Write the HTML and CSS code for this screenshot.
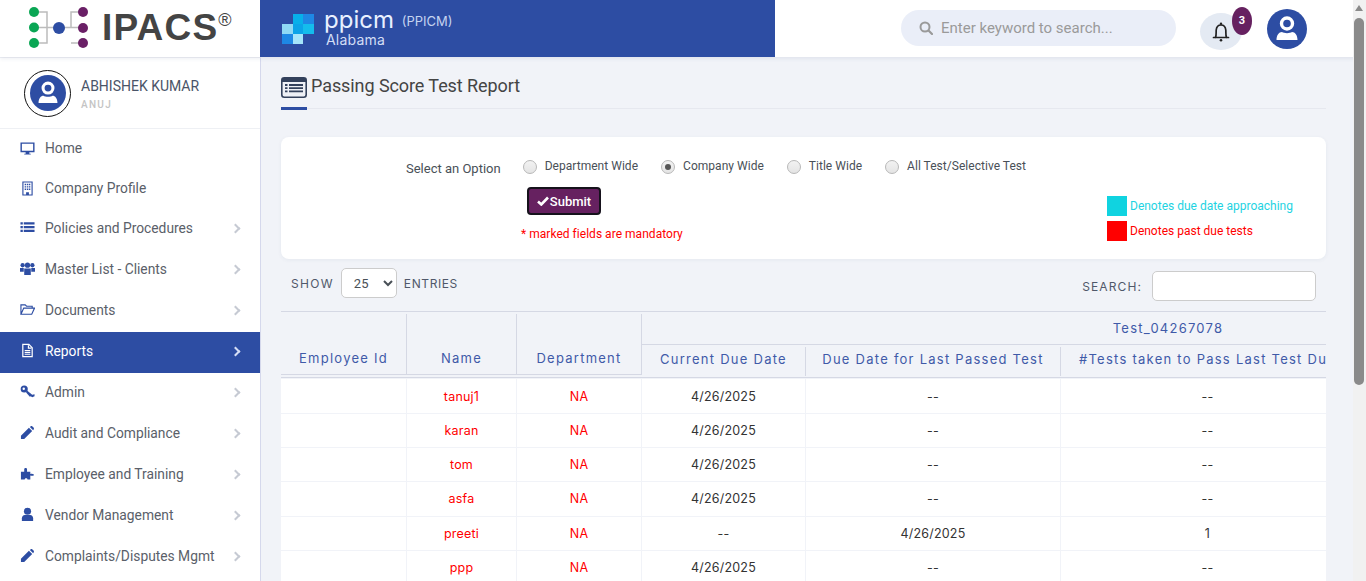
FILE: index.html
```html
<!DOCTYPE html>
<html lang="en">

<head>
    <meta charset="UTF-8">
    <meta name="viewport" content="width=device-width, initial-scale=1.0">
    <title>Passing Score Test Report</title>
    <link rel="stylesheet" href="styles.css">
</head>

<body>
    <header class="topbar">
        <div class="brand">
            <svg class="brand-tree" width="64" height="57" viewBox="0 0 64 57">
                <path d="M6 12H19V43H6M6 27.500H43V12H55M43 43H55M43 27.500H55" fill="none" stroke="#bcbcbc" stroke-width="1.500"/>
                <circle cx="6" cy="12" r="5" fill="#0aa654"/>
                <circle cx="6" cy="27.500" r="5" fill="#0aa654"/>
                <circle cx="6" cy="43" r="5" fill="#0aa654"/>
                <circle cx="31" cy="28" r="6" fill="#2d4da3"/>
                <circle cx="55" cy="12" r="5" fill="#6a1f66"/>
                <circle cx="55" cy="28" r="5" fill="#6a1f66"/>
                <circle cx="55" cy="43" r="5" fill="#6a1f66"/>
            </svg>
            <span class="brand-name">IPACS<sup>®</sup></span>
        </div>
        <div class="org">
            <svg width="32" height="30" viewBox="0 0 32 30">
                <rect x="11" y="0" width="10" height="10" fill="#07b0ea"/>
                <rect x="21" y="0" width="11" height="10" fill="#1e88e5"/>
                <rect x="0" y="10" width="11" height="10" fill="#8fd9f5"/>
                <rect x="11" y="10" width="10" height="10" fill="#0ba4e8"/>
                <rect x="21" y="10" width="11" height="10" fill="#14bdec"/>
                <rect x="0" y="20" width="11" height="10" fill="#1e88e5"/>
                <rect x="11" y="20" width="10" height="10" fill="#a5e5fa"/>
            </svg>
            <div class="org-text">
                <div class="org-name">ppicm <small>(PPICM)</small></div>
                <div class="org-state">Alabama</div>
            </div>
        </div>
        <div class="topbar-right">
            <div class="search-box">
                <svg width="14" height="14" viewBox="0 0 14 14"><circle cx="6" cy="6" r="4.500" fill="none" stroke="#9a9a9a" stroke-width="2"/><path d="M9.500 9.500L13 13" stroke="#9a9a9a" stroke-width="2.200" stroke-linecap="round"/></svg>
                <span>Enter keyword to search...</span>
            </div>
            <div class="bell">
                <svg width="18" height="20" viewBox="0 0 18 20"><path d="M1.500 15.500H16.500M3.500 15.500C4.500 13 4 10 4.200 8C4.500 5 6.500 3 9 3C11.500 3 13.500 5 13.800 8C14 10 13.500 13 14.500 15.500" fill="none" stroke="#222" stroke-width="1.700" stroke-linecap="round"/><circle cx="9" cy="1.800" r="1.200" fill="#222"/><circle cx="9" cy="18.200" r="1.300" fill="#222"/></svg>
                <span class="bell-count">3</span>
            </div>
            <svg class="avatar-top" width="40" height="40" viewBox="0 0 40 40"><use href="#user-disc"/></svg>
        </div>
    </header>

    <svg width="0" height="0" class="defs">
        <symbol id="user-disc" viewBox="0 0 40 40">
            <circle cx="20" cy="20" r="20" fill="#2d4da3"/>
            <circle cx="20" cy="14.500" r="5.500" fill="none" stroke="#fff" stroke-width="3.400"/>
            <path d="M9.500 31C9.500 26 12 23 15 23C17 24.500 23 24.500 25 23C28 23 30.500 26 30.500 31Z" fill="#fff"/>
        </symbol>
    </svg>

    <div class="layout">
        <aside class="sidebar">
            <div class="profile">
                <div class="profile-ring"><svg width="36" height="36" viewBox="0 0 40 40"><use href="#user-disc"/></svg></div>
                <div class="profile-text">
                    <div class="profile-name">ABHISHEK KUMAR</div>
                    <div class="profile-role">ANUJ</div>
                </div>
            </div>
            <nav class="menu">
                <a class="menu-item short"><svg viewBox="0 0 16 16"><path d="M0.500 1.500H15.500V12H10V13.500H11.500V14.500H4.500V13.500H6V12H0.500ZM2 3V10.300H14V3Z" fill-rule="evenodd"/></svg>Home</a>
                <a class="menu-item short"><svg viewBox="0 0 16 16"><path d="M2.500 0.500H13.500V15.500H2.500ZM3.700 1.700V14.300H6.500V12H9.500V14.300H12.300V1.700ZM5 3H6.500V4.500H5ZM7.300 3H8.800V4.500H7.300ZM9.500 3H11V4.500H9.500ZM5 5.500H6.500V7H5ZM7.300 5.500H8.800V7H7.300ZM9.500 5.500H11V7H9.500ZM5 8H6.500V9.500H5ZM7.300 8H8.800V9.500H7.300ZM9.500 8H11V9.500H9.500Z" fill-rule="evenodd"/></svg>Company Profile</a>
                <a class="menu-item has-sub"><svg viewBox="0 0 16 16"><path d="M0.500 2.500H3V4.800H0.500ZM4 2.500H15.500V4.800H4ZM0.500 6.500H3V8.800H0.500ZM4 6.500H15.500V8.800H4ZM0.500 10.500H3V12.800H0.500ZM4 10.500H15.500V12.800H4Z"/></svg>Policies and Procedures</a>
                <a class="menu-item has-sub"><svg viewBox="0 0 16 16"><circle cx="2.800" cy="4.500" r="2.300"/><circle cx="13.200" cy="4.500" r="2.300"/><circle cx="8" cy="4.500" r="2.800"/><path d="M0 7.500H4V11.500H0ZM12 7.500H16V11.500H12ZM4.500 8H11.500V15H4.500Z"/></svg>Master List - Clients</a>
                <a class="menu-item has-sub"><svg viewBox="0 0 16 16"><path d="M1 13V3H5.500L7 4.500H13V6.500M1 13L4 6.500H15.500L12.500 13Z" fill="none" stroke="#2d4da3" stroke-width="1.200"/></svg>Documents</a>
                <a class="menu-item has-sub active"><svg viewBox="0 0 16 16"><path d="M3 1.500H9.500L13 5V14.500H3ZM9 2.500V5.500H12M5 8H11M5 10H11M5 12H11" fill="none" stroke="#fff" stroke-width="1.300"/></svg>Reports</a>
                <a class="menu-item has-sub"><svg viewBox="0 0 16 16"><path d="M4.500 1.500A3.800 3.800 0 1 1 4.500 9.100A3.800 3.800 0 1 1 4.500 1.500ZM4 3.800A1.300 1.300 0 1 0 4 6.400A1.300 1.300 0 1 0 4 3.800Z" fill-rule="evenodd"/><path d="M7.500 7L13 11.500L15.500 11V13L13 14L11.500 13L10.500 13.500L6.500 9Z"/></svg>Admin</a>
                <a class="menu-item has-sub"><svg viewBox="0 0 16 16"><path d="M1 11.500L9.500 3L13 6.500L4.500 15H1ZM10.500 2L11.500 1.300C12 1 12.500 1 13 1.300L14.700 3C15 3.500 15 4 14.700 4.500L14 5.500Z"/></svg>Audit and Compliance</a>
                <a class="menu-item has-sub"><svg viewBox="0 0 16 16"><path d="M1 6H4.500V3.500C4.500 1.500 7.500 1.500 7.500 3.500V6H11V8.500C13.500 7.500 15 9.200 15 9.500C15 10 13 11 11 10V14.500H8C8 12.500 5 12.500 5 14.500H1Z"/></svg>Employee and Training</a>
                <a class="menu-item has-sub"><svg viewBox="0 0 16 16"><circle cx="8" cy="4.500" r="3.800"/><path d="M2 15V12C2 10 3.500 8.500 5 8.500H11C12.500 8.500 14 10 14 12V15Z"/></svg>Vendor Management</a>
                <a class="menu-item has-sub"><svg viewBox="0 0 16 16"><path d="M1 11.500L9.500 3L13 6.500L4.500 15H1ZM10.500 2L11.500 1.300C12 1 12.500 1 13 1.300L14.700 3C15 3.500 15 4 14.700 4.500L14 5.500Z"/></svg>Complaints/Disputes Mgmt</a>
            </nav>
        </aside>

        <main class="content">
            <div class="page-title">
                <svg width="26" height="21" viewBox="0 0 26 21"><rect x="0.800" y="0.800" width="24.400" height="19.400" rx="2.500" fill="#eef0f6" stroke="#33415c" stroke-width="1.600"/><path d="M1 1H25V5H1Z" fill="#33415c"/><path d="M4 8H6.500M8 8H22M4 11.200H6.500M8 11.200H22M4 14.400H6.500M8 14.400H22" stroke="#33415c" stroke-width="1.800"/></svg>
                <h1>Passing Score Test Report</h1>
            </div>

            <section class="card">
                <div class="option-form">
                    <div class="option-row">
                        <label class="option-label">Select an Option</label>
                        <div class="radios">
                            <label class="radio"><input type="radio" name="opt">Department Wide</label>
                            <label class="radio"><input type="radio" name="opt" checked>Company Wide</label>
                            <label class="radio"><input type="radio" name="opt">Title Wide</label>
                            <label class="radio"><input type="radio" name="opt">All Test/Selective Test</label>
                        </div>
                    </div>
                    <button class="submit-btn"><svg width="12" height="10" viewBox="0 0 12 10"><path d="M1 5.500L4.300 8.500L11 1.500" fill="none" stroke="#fff" stroke-width="2.600"/></svg>Submit</button>
                    <p class="mandatory">* marked fields are mandatory</p>
                </div>
                <div class="legend">
                    <div class="legend-row due"><span class="swatch"></span>Denotes due date approaching</div>
                    <div class="legend-row past"><span class="swatch"></span>Denotes past due tests</div>
                </div>
            </section>

            <div class="table-tools">
                <div class="tool show-tool">SHOW
                    <select class="entries"><option>25</option></select>
                    <span class="entries-label">ENTRIES</span></div>
                <div class="tool search-tool">SEARCH: <input class="table-search" type="text"></div>
            </div>

            <div class="table-wrap">
                <table class="report">
                    <colgroup>
                        <col class="c-emp"><col class="c-name"><col class="c-dept"><col class="c-due"><col class="c-last"><col class="c-tests"><col class="c-more">
                    </colgroup>
                    <thead>
                        <tr>
                            <th rowspan="2" class="frozen"><div>Employee Id</div></th>
                            <th rowspan="2" class="frozen"><div>Name</div></th>
                            <th rowspan="2" class="frozen"><div>Department</div></th>
                            <th colspan="4" class="group">Test_04267078</th>
                        </tr>
                        <tr class="sub-head">
                            <th><div>Current Due Date</div></th>
                            <th><div>Due Date for Last Passed Test</div></th>
                            <th><div class="long-head">#Tests taken to Pass Last Test Due Date</div></th>
                            <th></th>
                        </tr>
                    </thead>
                    <tbody>
                        <tr><td></td><td class="red">tanuj1</td><td class="red">NA</td><td>4/26/2025</td><td>--</td><td>--</td><td></td></tr>
                        <tr><td></td><td class="red">karan</td><td class="red">NA</td><td>4/26/2025</td><td>--</td><td>--</td><td></td></tr>
                        <tr><td></td><td class="red">tom</td><td class="red">NA</td><td>4/26/2025</td><td>--</td><td>--</td><td></td></tr>
                        <tr><td></td><td class="red">asfa</td><td class="red">NA</td><td>4/26/2025</td><td>--</td><td>--</td><td></td></tr>
                        <tr><td></td><td class="red">preeti</td><td class="red">NA</td><td>--</td><td>4/26/2025</td><td>1</td><td></td></tr>
                        <tr><td></td><td class="red">ppp</td><td class="red">NA</td><td>4/26/2025</td><td>--</td><td>--</td><td></td></tr>
                    </tbody>
                </table>
            </div>
        </main>
    </div>

    <div class="scroll-track">
        <span class="scroll-arrow"></span>
        <span class="scroll-thumb"></span>
    </div>
</body>

</html>
```
FILE: styles.css
```css
* {
    box-sizing: border-box;
}

html, body {
    height: 100%;
}

body {
    margin: 0;
    overflow: hidden;
    background: #f1f3f8;
    font-family: Roboto, "Liberation Sans", sans-serif;
    color: #495057;
}

.defs {
    position: absolute;
}

/* top bar */
.topbar {
    display: flex;
    height: 57px;
    background: #fff;
    box-shadow: 0 2px 4px rgba(40, 60, 110, .08);
    position: relative;
}

.brand {
    width: 260px;
    display: flex;
    align-items: center;
    padding-left: 28px;
    gap: 10px;
}

.brand-tree {
    flex: none;
}

.brand-name {
    font-family: "Liberation Sans", Arial, sans-serif;
    font-weight: 700;
    font-size: 37px;
    color: #444;
    letter-spacing: 1.200px;
    line-height: 1;
    margin-top: -2px;
}

.brand-name sup {
    font-size: 18px;
    font-weight: 400;
    vertical-align: 14px;
    line-height: 0;
    letter-spacing: 0;
}

.org {
    width: 515px;
    background: #2d4da3;
    display: flex;
    align-items: center;
    padding-left: 22px;
    gap: 10px;
    color: #e8f0ff;
}

.org-text {
    padding-bottom: 3px;
}

.org-name {
    font-family: Inter, sans-serif;
    font-size: 24px;
    line-height: 24px;
}

.org-name small {
    font-size: 13px;
    margin-left: 1px;
    vertical-align: 2px;
    color: #c5d3f0;
}

.org-state {
    font-family: Inter, sans-serif;
    font-size: 14px;
    line-height: 13px;
    margin-left: 2px;
    letter-spacing: .2px;
    color: #d3def5;
}

.topbar-right {
    flex: 1;
    display: flex;
    align-items: center;
    padding-left: 126px;
}

.search-box {
    width: 275px;
    height: 36px;
    border-radius: 18px;
    background: #eaeef8;
    display: flex;
    align-items: center;
    gap: 8px;
    padding-left: 18px;
    color: #9a9a9a;
    font-size: 15px;
    margin-top: -1px;
}

.bell {
    width: 42px;
    height: 37px;
    border-radius: 50%;
    background: #e4eaf3;
    margin-left: 24px;
    margin-top: 6px;
    display: flex;
    align-items: center;
    justify-content: center;
    position: relative;
}

.bell-count {
    position: absolute;
    top: -6px;
    right: -10px;
    width: 20px;
    height: 28px;
    border-radius: 10px / 14px;
    background: #662160;
    color: #fff;
    font-size: 11px;
    font-weight: 700;
    text-align: center;
    line-height: 27px;
}

.avatar-top {
    margin-left: 25px;
}

/* sidebar */
.layout {
    display: flex;
    height: 524px;
}

.sidebar {
    width: 261px;
    flex: none;
    background: #fff;
    border-right: 1px solid #d5d8ec;
    border-top: 1px solid #eef0f4;
}

.profile {
    height: 71px;
    display: flex;
    align-items: center;
    gap: 10px;
    padding-left: 24px;
    border-bottom: 1px solid #eef0f4;
}

.profile-ring {
    width: 47px;
    height: 47px;
    border: 1px solid #111;
    border-radius: 50%;
    display: flex;
    align-items: center;
    justify-content: center;
    background: #fff;
}

.profile-text {
    padding-top: 2px;
}

.profile-name {
    font-size: 14px;
    line-height: 17px;
    color: #4a5468;
}

.profile-role {
    font-size: 10px;
    font-weight: 500;
    letter-spacing: 1.300px;
    color: #c4c4c4;
    margin-top: 4px;
}

.menu-item {
    display: flex;
    align-items: center;
    height: 41px;
    padding: 0 0 4px 20px;
    font-size: 13.800px;
    color: #5a6069;
    position: relative;
}

.menu-item.short {
    height: 40px;
    padding-bottom: 2px;
}

.menu-item svg {
    width: 15px;
    height: 15px;
    margin-right: 10px;
    fill: #2d4da3;
    flex: none;
}

.menu-item.has-sub::after {
    content: "";
    position: absolute;
    right: 21px;
    top: calc(50% - 2px);
    width: 5px;
    height: 5px;
    margin-top: -3px;
    border-top: 2px solid #c6cad3;
    border-right: 2px solid #c6cad3;
    transform: rotate(45deg);
}

.menu-item.active {
    background: #2d4da3;
    color: #fff;
}

.menu-item.active svg {
    fill: #fff;
}

.menu-item.active::after {
    border-color: #d5def5;
}

/* main */
.content {
    flex: 1;
    min-width: 0;
    padding: 19px 40px 0 20px;
}

.page-title {
    display: flex;
    align-items: flex-start;
    gap: 4px;
    height: 33px;
    border-bottom: 1px solid #e6e8ef;
    position: relative;
}

.page-title svg {
    margin-top: 1px;
}

.page-title::after {
    content: "";
    position: absolute;
    left: 0;
    bottom: -2px;
    width: 26px;
    height: 3px;
    background: #2d4da3;
}

.page-title h1 {
    margin: 0;
    font-size: 18px;
    line-height: 20px;
    font-weight: 400;
    letter-spacing: -.08px;
    color: #444;
}

.card {
    margin-top: 28px;
    height: 122px;
    background: #fff;
    border-radius: 8px;
    box-shadow: 0 1px 4px rgba(40, 60, 110, .06);
    display: flex;
    justify-content: space-between;
    padding: 20px 32px 0 125px;
}

.option-row {
    display: flex;
    align-items: flex-start;
}

.option-label {
    font-size: 13px;
    line-height: 24px;
    color: #495057;
    margin-right: 22px;
}

.radios {
    display: flex;
    gap: 23px;
}

.radio {
    display: flex;
    align-items: center;
    font-size: 12px;
    letter-spacing: .03px;
    height: 18px;
    color: #495057;
}

.radio input {
    appearance: none;
    width: 14px;
    height: 14px;
    margin: 2px 8px 0 0;
    border: 1px solid #b8b8b8;
    border-radius: 50%;
    background: linear-gradient(#f2f2f2, #e4e4e4);
    position: relative;
}

.radio input:checked::before {
    content: "";
    position: absolute;
    left: 3px;
    top: 3px;
    width: 6px;
    height: 6px;
    border-radius: 50%;
    background: #555;
}

.submit-btn {
    display: flex;
    align-items: center;
    justify-content: center;
    gap: 1px;
    width: 74px;
    height: 28px;
    margin: 6px 0 0 121px;
    padding: 0;
    background: #662160;
    border: 2px solid #16121c;
    border-radius: 4px;
    color: #fff;
    font-family: Roboto, sans-serif;
    font-size: 13px;
    font-weight: 500;
}

.mandatory {
    margin: 12px 0 0 115px;
    font-size: 12px;
    letter-spacing: .03px;
    color: #ff0000;
}

.legend {
    padding-top: 39px;
    width: 187px;
}

.legend-row {
    display: flex;
    align-items: flex-start;
    height: 20px;
    line-height: 21px;
    gap: 3px;
    font-size: 12px;
    margin-bottom: 5px;
}

.swatch {
    width: 20px;
    height: 20px;
}

.due {
    color: #1ed3e2;
}

.due .swatch {
    background: #10d3e0;
}

.past {
    color: #ff0000;
}

.past .swatch {
    background: #ff0000;
}

/* table */
.table-tools {
    display: flex;
    justify-content: space-between;
    align-items: center;
    height: 30px;
    margin-top: 10px;
    padding: 0 10px;
}

.tool {
    display: flex;
    align-items: center;
    gap: 7px;
    font-family: Inter, sans-serif;
    font-size: 12px;
    letter-spacing: 1.300px;
    color: #50586a;
}

.show-tool {
    padding-bottom: 2px;
}

.entries-label {
    letter-spacing: .6px;
}

.search-tool {
    padding-top: 4px;
    letter-spacing: 1.100px;
}

.entries {
    width: 56px;
    height: 30px;
    border: 1px solid #ccc;
    border-radius: 5px;
    background: #fff;
    font-family: Roboto, sans-serif;
    font-size: 13px;
    color: #495057;
    padding-left: 8px;
}

.table-search {
    width: 164px;
    height: 30px;
    border: 1px solid #ccc;
    border-radius: 5px;
    background: #fff;
    margin-left: 3px;
}

.table-wrap {
    overflow: hidden;
    margin-top: 12px;
    border-top: 1px solid #d5d8e4;
}

.report {
    border-collapse: separate;
    border-spacing: 0;
    table-layout: fixed;
    width: 1413px;
    font-family: Inter, sans-serif;
    font-size: 12.500px;
    letter-spacing: .2px;
}

.c-emp { width: 126px; }
.c-name { width: 110px; }
.c-dept { width: 125px; }
.c-due { width: 164px; }
.c-last { width: 255px; }
.c-tests { width: 294px; }
.c-more { width: 339px; }

.report th {
    font-family: Inter, sans-serif;
    font-size: 13px;
    font-weight: 400;
    letter-spacing: 1.250px;
    color: #3f5aa8;
    padding: 0;
    white-space: nowrap;
}

.frozen {
    height: 66px;
    vertical-align: top;
    padding-top: 2px !important;
    border-bottom: 1px solid #d5d8e4;
}

.frozen div {
    height: 61px;
    border-right: 1px solid #d5d8e4;
    border-bottom: 1px solid #d5d8e4;
    padding-top: 36px;
    text-align: center;
}

.group {
    height: 33px;
    border-bottom: 1px solid #d5d8e4;
}

.sub-head th {
    height: 33px;
    border-bottom: 1px solid #d5d8e4;
}

.sub-head th div {
    height: 29px;
    line-height: 24px;
    border-right: 1px solid #d5d8e4;
    text-align: center;
}

.sub-head th .long-head {
    border-right: 0;
    text-align: left;
    padding-left: 18px;
    overflow: hidden;
}

.report td {
    height: 34.200px;
    padding: 0;
    background: #fff;
    text-align: center;
    color: #333;
    border-right: 1px solid #f1f3f8;
    border-bottom: 1px solid #f1f3f8;
}

.report td.red {
    color: #ff0000;
}

.report tbody tr:first-child td {
    height: 36px;
    border-top: 1px solid #f1f3f8;
}

/* scrollbar */
.scroll-track {
    position: absolute;
    top: 0;
    right: 0;
    width: 13px;
    height: 581px;
    background: #f1f1f1;
}

.scroll-arrow {
    position: absolute;
    left: 2px;
    top: 5px;
    border: 4.500px solid transparent;
    border-top: 0;
    border-bottom: 6px solid #8a8a8a;
}

.scroll-thumb {
    position: absolute;
    left: 1px;
    top: 18px;
    width: 10px;
    height: 367px;
    border-radius: 5px;
    background: #8a8a8a;
}
```
